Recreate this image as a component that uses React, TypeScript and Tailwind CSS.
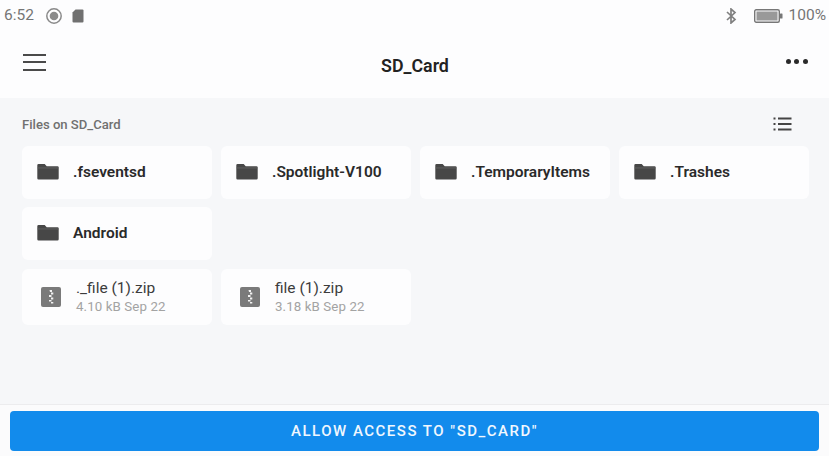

const FolderIcon = () => (
  <svg width="22" height="17" viewBox="0 0 22 17" className="shrink-0 -translate-y-px">
    <path d="M1.5 1h6.2l2 2.3h10.8a1.2 1.2 0 0 1 1.2 1.2v10.8a1.2 1.2 0 0 1-1.2 1.2H1.5a1.2 1.2 0 0 1-1.2-1.2V2.2A1.2 1.2 0 0 1 1.5 1z" fill="#474747" />
    <rect x="0.3" y="4.6" width="21.4" height="0.7" fill="#6a6a6a" />
  </svg>
);

const ZipIcon = () => (
  <svg width="20" height="20" viewBox="0 0 20 20" className="shrink-0">
    <rect width="20" height="20" rx="2" fill="#7a7a7a" />
    <path d="M8.5 3h2.5v2h-2zM10 5.5h2.3v2H10zM8 8h2.5v2H8zM10 10.5h2.3v2H10zM8 13h2.5v1.6H8zM10 15h2.3v1.6H10z" fill="#f2f2f2" />
  </svg>
);

const Folder = ({ name }: { name: string }) => (
  <div className="flex h-[53px] w-[190px] items-center rounded-md bg-[#fdfdfe] pl-[15px]">
    <FolderIcon />
    <span className="ml-[14px] text-[15.5px] font-semibold text-[#2a2a2a]">{name}</span>
  </div>
);

const ZipFile = ({ name, meta }: { name: string; meta: string }) => (
  <div className="flex h-[56px] w-[190px] items-center rounded-md bg-[#fdfdfe] pl-[19px]">
    <ZipIcon />
    <div className="ml-[15px] flex flex-col">
      <span className="text-[15.5px] leading-[19px] text-[#3c3c3c]">{name}</span>
      <span className="text-[13.3px] leading-[18px] tracking-[0.1px] text-[#a3a3a3]">{meta}</span>
    </div>
  </div>
);

export default function App() {
  return (
    <div className="flex h-[456px] w-[829px] flex-col overflow-hidden bg-[#f6f7f9] font-['Roboto',sans-serif]">
      <div className="h-[98px] shrink-0 bg-[#fdfdfe]">
        <div className="flex h-[31px] items-center justify-between pl-1 pr-[3px] text-[15.5px] text-[#757575]">
          <div className="flex items-center">
            <span>6:52</span>
            <svg width="18" height="18" viewBox="0 0 18 18" className="ml-[11px]">
              <circle cx="9" cy="9" r="7.2" fill="none" stroke="#8a8a8a" strokeWidth="1.5" />
              <circle cx="9" cy="9" r="4.3" fill="#8a8a8a" />
            </svg>
            <svg width="12" height="14" viewBox="0 0 12 14" className="ml-[9px]">
              <path d="M3.5 0.5h7a1 1 0 0 1 1 1v11a1 1 0 0 1-1 1h-9a1 1 0 0 1-1-1V3.5z" fill="#707070" />
            </svg>
          </div>
          <div className="flex items-center">
            <svg width="12" height="16" viewBox="0 0 12 16" className="mr-[17px]">
              <path d="M2 4l8 7.5L6 15V1l4 3.5L2 12" fill="none" stroke="#808080" strokeWidth="1.7" />
            </svg>
            <svg width="29" height="14" viewBox="0 0 29 14" className="mr-[6px]">
              <rect x="0.7" y="0.7" width="24.6" height="12.6" rx="1.5" fill="none" stroke="#777777" strokeWidth="1.4" />
              <rect x="2.5" y="2.5" width="21" height="9" fill="#999999" />
              <rect x="26" y="4.5" width="2.5" height="5" rx="0.5" fill="#777777" />
            </svg>
            <span>100%</span>
          </div>
        </div>
        <div className="flex h-[67px] items-center justify-between pl-[23px] pr-[21px]">
          <div className="flex w-[23px] flex-col gap-[5.5px] pb-[5px]">
            <div className="h-[2px] bg-[#4a4a4a]" />
            <div className="h-[2px] bg-[#4a4a4a]" />
            <div className="h-[2px] bg-[#4a4a4a]" />
          </div>
          <span className="pr-[2px] pt-[3px] text-[17.8px] font-semibold text-[#222222]">SD_Card</span>
          <div className="flex gap-[3.5px] pb-[6px]">
            <div className="h-[5px] w-[5px] rounded-full bg-[#2a2a2a]" />
            <div className="h-[5px] w-[5px] rounded-full bg-[#2a2a2a]" />
            <div className="h-[5px] w-[5px] rounded-full bg-[#2a2a2a]" />
          </div>
        </div>
      </div>

      <div className="flex-1 pl-[22px] pr-[19px]">
        <div className="flex h-[48px] items-center justify-between pr-[18px] pt-[5px]">
          <span className="text-[13.1px] font-medium text-[#707070]">Files on SD_Card</span>
          <svg width="19" height="14" viewBox="0 0 19 14" className="-translate-y-[1px]">
            <path d="M0.5 1.5h2M5 1.5h13.5M0.5 7h2M5 7h13.5M0.5 12.5h2M5 12.5h13.5" stroke="#444444" strokeWidth="2" fill="none" />
          </svg>
        </div>
        <div className="flex flex-wrap gap-x-[9px] gap-y-[8px]">
          <Folder name=".fseventsd" />
          <Folder name=".Spotlight-V100" />
          <Folder name=".TemporaryItems" />
          <Folder name=".Trashes" />
          <Folder name="Android" />
        </div>
        <div className="mt-[9px] flex gap-[9px]">
          <ZipFile name="._file (1).zip" meta="4.10 kB Sep 22" />
          <ZipFile name="file (1).zip" meta="3.18 kB Sep 22" />
        </div>
      </div>

      <div className="flex h-[52px] shrink-0 items-start border-t border-[#ececee] bg-[#fbfbfc] px-[10px] pt-[6px]">
        <div className="flex h-[40px] w-full items-center justify-center rounded-[4px] bg-[#128bec] text-[15px] font-medium tracking-[1.5px] text-[#f0f7fe]">
          ALLOW ACCESS TO &quot;SD_CARD&quot;
        </div>
      </div>
    </div>
  );
}
